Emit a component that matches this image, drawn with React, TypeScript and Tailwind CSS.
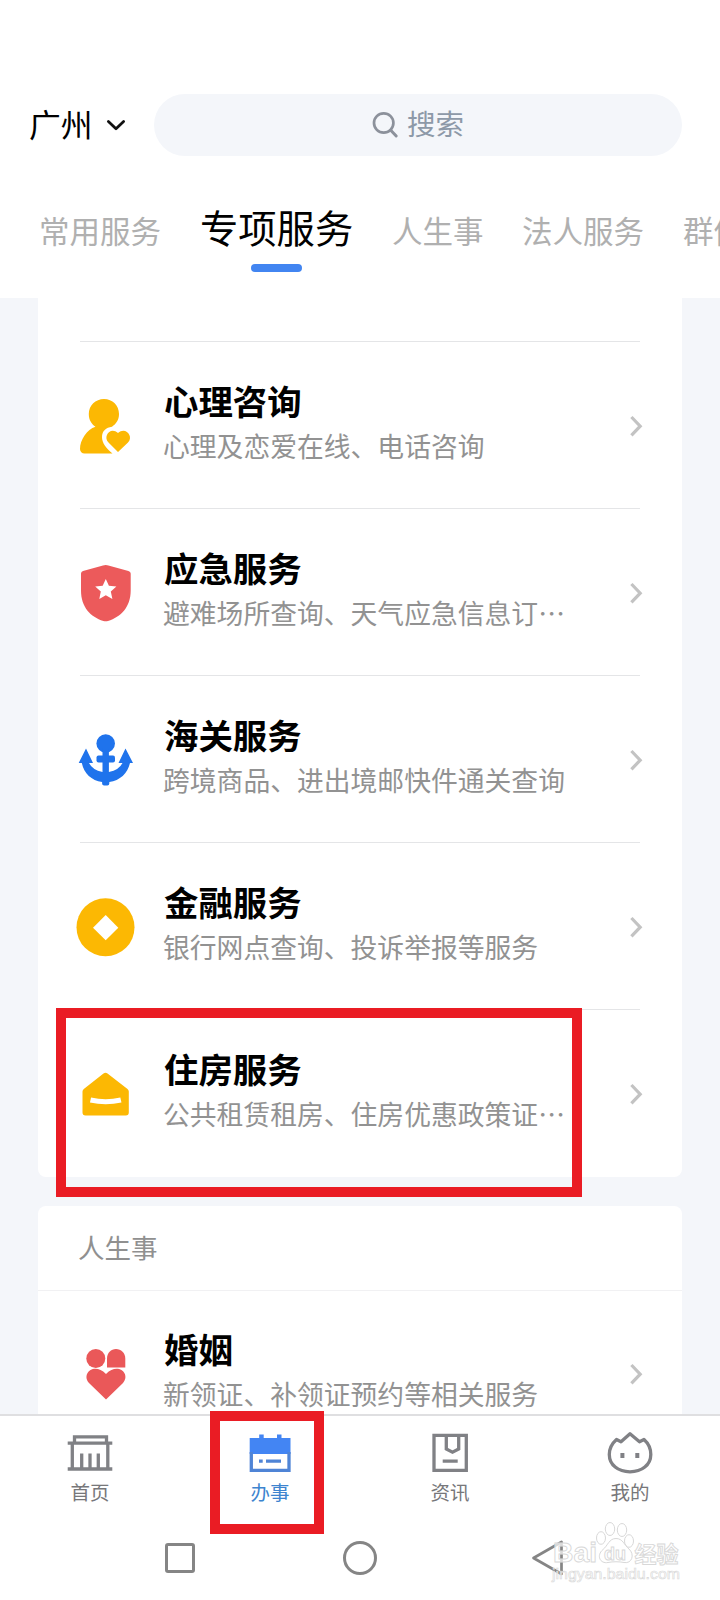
import type { ReactNode } from 'react';

type Service = { title: string; desc: string; icon: ReactNode };

const services: Service[] = [
  { title: '心理咨询', desc: '心理及恋爱在线、电话咨询', icon: <PersonHeartIcon /> },
  { title: '应急服务', desc: '避难场所查询、天气应急信息订…', icon: <ShieldIcon /> },
  { title: '海关服务', desc: '跨境商品、进出境邮快件通关查询', icon: <AnchorIcon /> },
  { title: '金融服务', desc: '银行网点查询、投诉举报等服务', icon: <CoinIcon /> },
  { title: '住房服务', desc: '公共租赁租房、住房优惠政策证…', icon: <HouseIcon /> },
];

const navItems = [
  { label: '首页', icon: <HomeIcon />, active: false },
  { label: '办事', icon: <CalendarIcon />, active: true },
  { label: '资讯', icon: <NewsIcon />, active: false },
  { label: '我的', icon: <MineIcon />, active: false },
];

export default function App() {
  return (
    <div
      lang="zh-CN"
      className="relative flex h-[1600px] w-[720px] flex-col overflow-hidden bg-[#f4f6fa] font-['Noto_Sans_CJK_SC',sans-serif]"
    >
      {/* ── Header ── */}
      <header className="h-[298px] shrink-0 bg-white pt-[94px]">
        <div className="flex h-[62px] items-center pl-[29px]">
          <span className="w-[63px] pb-[3px] text-[31.8px] leading-none whitespace-nowrap text-black">广州</span>
          <svg className="ml-[14px] h-5 w-5" viewBox="0 0 20 20" fill="none" stroke="#111" strokeWidth="2.8">
            <path strokeLinecap="round" strokeLinejoin="round" d="M2.400 6.500L10 13.700l7.600-7.200" />
          </svg>
          <div className="ml-7 flex h-full w-[528px] items-center rounded-full bg-[#f4f6fa] pl-[218px]">
            <svg className="h-7 w-7" viewBox="0 0 28 28" fill="none" stroke="#8c919b" strokeWidth="2.7">
              <circle cx="11.700" cy="12" r="9.700" />
              <path d="M18.500 19l5.700 6" strokeLinecap="round" strokeWidth="3" />
            </svg>
            <span className="ml-[7px] pb-[3px] text-[28.5px] leading-none text-[#8d99a8]">搜索</span>
          </div>
        </div>

        <nav className="mt-12 flex h-[72px] w-[800px] pl-[39px] text-[30.5px] text-[#b0b0b0]">
          <span className="w-[161px] pt-[11px] leading-[30px]">常用服务</span>
          <div className="flex w-[192px] flex-col text-black">
            <span className="pt-[3px] text-[38.3px] leading-[40px]">专项服务</span>
            <span className="mt-[17px] ml-[51px] h-2 w-[51px] rounded-full bg-[#4285f1]" />
          </div>
          <span className="w-[130px] pt-[11px] leading-[30px]">人生事</span>
          <span className="w-[161px] pt-[11px] leading-[30px]">法人服务</span>
          <span className="pt-[11px] leading-[30px]">群体</span>
        </nav>
      </header>

      {/* ── Service list ── */}
      <main className="flex-1 overflow-hidden px-[38px]">
        <section className="h-[879px] rounded-b-lg bg-white pt-[43px]">
          {services.map((s) => (
            <ServiceRow key={s.title} {...s} bordered />
          ))}
        </section>

        <section className="mt-[29px] rounded-t-lg bg-white">
          <h2 className="h-[84px] pt-[27px] pl-10 text-[26.5px] leading-[28px] text-[#909090]">人生事</h2>
          <div className="border-t border-[#f1f1f3]">
            <div className="-mt-px">
              <ServiceRow title="婚姻" desc="新领证、补领证预约等相关服务" icon={<CoupleIcon />} />
            </div>
          </div>
        </section>
      </main>

      {/* ── Bottom tabs ── */}
      <footer className="h-[186px] shrink-0 border-t-2 border-[#dfdfe1] bg-white">
        <div className="grid h-[99px] grid-cols-4">
          {navItems.map((item) => (
            <div key={item.label} className="flex flex-col items-center pt-4">
              {item.icon}
              <span className={`mt-1 text-[19.5px] leading-[24px] ${item.active ? 'text-[#3d84cf]' : 'text-[#77777a]'}`}>
                {item.label}
              </span>
            </div>
          ))}
        </div>
        <div className="flex h-[84px] items-start pt-[25px] pl-[165px]">
          <div className="mt-[3px] h-[30px] w-[30px] rounded-[3px] border-[3px] border-[#858585]" />
          <div className="mt-px ml-[148px] h-[34px] w-[34px] rounded-full border-[3px] border-[#858585]" />
          <svg className="ml-[154px] h-9 w-9" viewBox="0 0 36 36" fill="none" stroke="#858585" strokeWidth="2.7">
            <path strokeLinejoin="round" d="M2.5 18L30.5 2v32z" />
          </svg>
        </div>
      </footer>

      {/* ── Highlight frames ── */}
      <div className="absolute top-[1008px] left-[56px] h-[189px] w-[526px] border-[10px] border-[#ea1c24]" />
      <div className="absolute top-[1411px] left-[210px] h-[123px] w-[114px] border-[10px] border-[#ea1c24]" />

      <Watermark />
    </div>
  );
}

function ServiceRow({ title, desc, icon, bordered }: Service & { bordered?: boolean }) {
  return (
    <div className={`mx-[42px] flex h-[167px] ${bordered ? 'border-t border-[#e4e5e7]' : ''}`}>
      <div className="-ml-1 w-[60px] shrink-0 pt-[54px]">{icon}</div>
      <div className="ml-[27px] w-[436px] shrink-0 pt-[38px] whitespace-nowrap">
        <h3 className="pl-px text-[34.4px] leading-[40px] font-bold text-black">{title}</h3>
        <p className="mt-[10px] text-[26.8px] leading-[32px] text-[#929292]">{desc}</p>
      </div>
      <svg className="mt-[72px] ml-[30px] h-6 w-4 shrink-0" viewBox="0 0 16 24" fill="none" stroke="#c3c3c3" strokeWidth="3.2">
        <path d="M2.400 3l8.800 9.200-8.800 9.200" />
      </svg>
    </div>
  );
}

/* Service icons share a 60x60 box */

function PersonHeartIcon() {
  return (
    <svg className="h-[60px] w-[60px]" viewBox="0 0 60 60" fill="#fcb803">
      <path d="M28 3C19.500 3 12.800 9.500 12.800 18c0 6 2.700 10 6.700 12.800C11 33.500 4 44 4 53c0 2.500 2 4.500 4.500 4.500H36.500C30 52 26 47 26 41c0-6 4-9.500 10-10.300C40 28 43 24 43 18 43 9.500 36.500 3 28 3z" />
      <path d="M42 56L32.500 46.500c-6-6 2-16.500 9.500-9.500 7.500-7 16 3.500 10 9.500z" />
    </svg>
  );
}

function ShieldIcon() {
  return (
    <svg className="h-[60px] w-[60px]" viewBox="0 0 60 60">
      <path fill="#ec5a5b" d="M27 2.500q2.700-1 5.400 0l20 5.500q2.300.7 2.300 2.500v17C54.700 44 45 54 32 58q-2.400.7-4.600 0C14.500 54 5 44 5 27.500v-17Q5 8.700 7 8z" />
      <path fill="#fff" d="M29.800 16l3.100 6.800 7.500.8-5.600 5 1.600 7.300-6.600-3.700-6.500 3.700 1.500-7.300-5.600-5 7.500-.8z" />
    </svg>
  );
}

function AnchorIcon() {
  return (
    <svg className="h-[60px] w-[60px]" viewBox="0 0 60 60" fill="#1f73ec">
      <circle cx="29.700" cy="13.500" r="9.300" />
      <rect x="20.500" y="25.500" width="18.500" height="7" rx="2" />
      <path d="M26.500 18h6.400v24Q43 40 46.500 33H42.500L49.500 18.500 57 33H54C51.500 43.500 44 50.500 33.300 52V53.500q0 2-2 2h-3.200q-2 0-2-2V52C15.500 50.500 8 43.500 5.800 33H2.700L10 18.500l7 14.500h-4Q16.500 40 26.500 42z" />
    </svg>
  );
}

function CoinIcon() {
  return (
    <svg className="h-[60px] w-[60px]" viewBox="0 0 60 60">
      <circle cx="29.500" cy="30.300" r="29" fill="#fcb803" />
      <path fill="#fff" d="M29.700 18L42.300 30.700 29.700 43.300 17 30.700z" />
    </svg>
  );
}

function HouseIcon() {
  return (
    <svg className="h-[60px] w-[60px]" viewBox="0 0 60 60">
      <path fill="#fcb803" d="M27.500 9.500q2-1.500 4 0L51.500 25q1.300 1 1.300 2.500V48.500q0 3-3 3H9.500q-3 0-3-3V27.500q0-1.500 1.300-2.500z" />
      <path fill="none" stroke="#fff" strokeWidth="5" d="M14.500 36q15.200 3.500 30.400 0" />
    </svg>
  );
}

function CoupleIcon() {
  return (
    <svg className="h-[60px] w-[60px]" viewBox="0 0 60 60" fill="#ea5859">
      <circle cx="19.800" cy="14.500" r="9.500" />
      <path d="M31 23.500v-9C31 9 35 5 40 5s9.300 4 9.300 9.500v9z" />
      <path d="M30 55.500L13 39C5 30 18 17.500 30 30c12-12.500 25 0 17 9z" />
    </svg>
  );
}

/* Bottom tab icons */

function HomeIcon() {
  return (
    <svg className="h-[44px] w-[46px]" viewBox="0 0 46 44" fill="none" stroke="#808185" strokeWidth="3.3">
      <path d="M7.500 11V4.800h32V11M.7 11.200h44.600M.7 37h44.600M5.300 12v24M40.800 12v24M14.700 21.500V36M23 21.500V36M31.300 21.500V36" />
    </svg>
  );
}

function CalendarIcon() {
  return (
    <svg className="h-[44px] w-[46px]" viewBox="0 0 46 44">
      <path fill="#4385f3" d="M2.700 6h9.500V2.500h4.500V6H30V2.500h4.500V6h9v16H2.700z" />
      <path fill="none" stroke="#4f84d6" strokeWidth="3.3" d="M4.300 20v18.300H42V20M12 29.200h3.700M19 29.200h15" />
    </svg>
  );
}

function NewsIcon() {
  return (
    <svg className="h-[44px] w-[46px]" viewBox="0 0 46 44" fill="none" stroke="#808185" strokeWidth="3.300">
      <path d="M7 3.300h32.300v35H7zM19.300 4v13l6.200 3.200 6.200-3.200V4M15.700 29.200h15" />
    </svg>
  );
}

function MineIcon() {
  return (
    <svg className="h-[44px] w-[46px]" viewBox="0 0 46 44" fill="none" stroke="#808185" strokeWidth="3.300">
      <path strokeLinejoin="round" d="M9.500 7.500l4.500 2.300 9-8 9.500 8L37 7.500c4.500 4 6.800 9 6.800 15 0 10.500-9 17.300-20.800 17.300S2.300 33 2.300 22.500c0-6 2.700-11 7.200-15z" />
      <path strokeWidth="4" d="M15.400 21v5M30.300 21v5" />
    </svg>
  );
}

function Watermark() {
  return (
    <div className="absolute top-[1520px] left-[550px] h-[64px] w-[140px]">
      <svg className="h-full w-full" viewBox="0 0 140 64" fill="#fff" fillOpacity="0.7" stroke="#d8d8d8">
        <ellipse cx="60" cy="9" rx="4.700" ry="6.500" />
        <ellipse cx="72" cy="10" rx="4.700" ry="6.500" />
        <ellipse cx="51" cy="18" rx="4.500" ry="6.300" />
        <ellipse cx="79" cy="21" rx="4.500" ry="6.300" />
        <path d="M66 18.500c-7 0-8 7-13 11-7 6-3 14.500 5 13 5-1 11-1 16 0 8 1.500 11-8 5-13.500-5-4-6-10.500-13-10.500z" />
        <g fontFamily="'Liberation Sans', sans-serif" fontWeight="bold" strokeWidth="0.9">
          <text x="3" y="42" fontSize="28" textLength="44" lengthAdjust="spacingAndGlyphs">Bai</text>
          <text x="54" y="40" fontSize="18" textLength="22" lengthAdjust="spacingAndGlyphs">du</text>
        </g>
        <text x="84.500" y="41.500" fontSize="22" fontFamily="'Noto Sans CJK SC', sans-serif" fontWeight="bold" strokeWidth="0.9">经验</text>
        <text
          x="2"
          y="58.500"
          fontSize="15"
          fontFamily="'Liberation Sans', sans-serif"
          strokeWidth="0.6"
          textLength="128"
          lengthAdjust="spacingAndGlyphs"
        >
          jingyan.baidu.com
        </text>
      </svg>
    </div>
  );
}
